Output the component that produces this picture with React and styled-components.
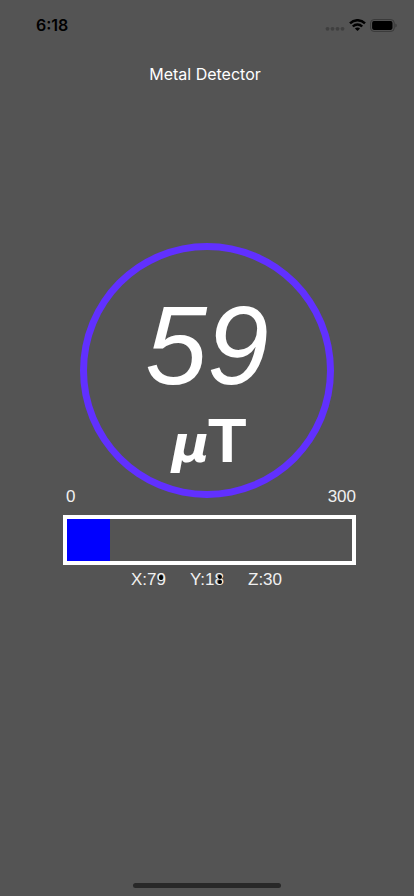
import styled, { createGlobalStyle } from 'styled-components';

const GlobalStyle = createGlobalStyle`
  * {
    box-sizing: border-box;
  }
  body {
    margin: 0;
    background: #545454;
  }
`;

const StyledScreen = styled.div`
  display: flex;
  flex-direction: column;
  min-height: 100vh;
  background: #545454;
  color: #ffffff;
  font-family: 'Liberation Sans', sans-serif;
`;

const StyledStatusBar = styled.div`
  display: flex;
  align-items: center;
  justify-content: space-between;
  height: 50px;
  padding: 0 16px 0 36px;
  color: #000000;
  time {
    font-family: Inter, sans-serif;
    font-size: 16px;
    font-weight: 600;
    line-height: 20px;
  }
`;

const StyledStatusIcons = styled.div`
  display: flex;
  align-items: center;
  gap: 4px;
  svg {
    display: block;
  }
`;

const StyledTitle = styled.h1`
  margin: 12px 0 0;
  padding-right: 4px;
  font-family: Inter, sans-serif;
  font-size: 16px;
  font-weight: 400;
  line-height: 24px;
  text-align: center;
`;

const StyledMain = styled.main`
  display: flex;
  flex: 1;
  flex-direction: column;
  padding-top: 157px;
`;

const StyledDial = styled.div`
  display: flex;
  flex-direction: column;
  align-items: center;
  align-self: center;
  width: 254px;
  height: 255px;
  padding-top: 40px;
  border: 7px solid #6130ff;
  border-radius: 50%;
`;

const StyledValue = styled.div`
  font-size: 111px;
  font-style: italic;
  line-height: 112px;
`;

const StyledUnit = styled.div`
  margin-top: 6px;
  padding-left: 4px;
  font-size: 63px;
  font-weight: 700;
  line-height: 64px;
  em {
    margin-right: -2px;
    font-family: 'DejaVu Sans', sans-serif;
    font-size: 52px;
    line-height: 52px;
  }
`;

const StyledMeter = styled.section`
  margin: -10px 58px 0 63px;
`;

const StyledScale = styled.div`
  display: flex;
  justify-content: space-between;
  padding-left: 3px;
  color: #f0f0f0;
  font-size: 17px;
  line-height: 18px;
`;

const StyledTrack = styled.div`
  height: 50px;
  margin-top: 9px;
  border: 4px solid #ffffff;
`;

const StyledFill = styled.div`
  height: 100%;
  background: #0000ff;
`;

const StyledReadings = styled.div`
  display: flex;
  justify-content: center;
  gap: 24px;
  margin-top: 5px;
  padding-right: 6px;
  color: #f0f0f0;
  font-size: 17px;
  line-height: 20px;
`;

const StyledDigit = styled.span`
  position: relative;
`;

const StyledDot = styled.i`
  position: absolute;
  top: ${({ $top }) => $top}px;
  left: 3px;
  width: 4px;
  height: ${({ $size }) => $size}px;
  border-radius: 50%;
  background: #000000;
`;

const StyledHomeIndicator = styled.div`
  align-self: center;
  width: 148px;
  height: 5px;
  margin-bottom: 8px;
  border-radius: 3px;
  background: #282828;
`;

function StatusIcons() {
  return (
    <StyledStatusIcons>
      <svg width="20" height="14" viewBox="0 0 20 14" fill="#3f3f3f">
        <circle cx="2.5" cy="10.8" r="1.9" />
        <circle cx="7.5" cy="10.8" r="1.9" />
        <circle cx="12.5" cy="10.8" r="1.9" />
        <circle cx="17.5" cy="10.8" r="1.9" />
      </svg>
      <svg width="17" height="12" viewBox="0 0 17 12">
        <g fill="none" stroke="#000" strokeWidth="2.4">
          <path d="M1 4.4C5.2.1 11.8.1 16 4.4" />
          <path d="M3.8 7.5c2.7-2.7 6.7-2.7 9.4 0" />
        </g>
        <path d="M5.9 9.5c1.5-1.3 3.7-1.3 5.2 0L8.5 12z" />
      </svg>
      <svg width="28" height="13" viewBox="0 0 28 13">
        <rect
          x=".6"
          y=".6"
          width="23.6"
          height="11.8"
          rx="3.3"
          fill="none"
          stroke="#383838"
        />
        <rect x="2.1" y="2.1" width="20.4" height="8.8" rx="1.8" />
        <path d="M25.4 4.4c1.7.7 1.7 3.5 0 4.2z" fill="#383838" />
      </svg>
    </StyledStatusIcons>
  );
}

export default function App() {
  const value = 59;
  const percent = 15;

  return (
    <StyledScreen>
      <GlobalStyle />
      <StyledStatusBar>
        <time>6:18</time>
        <StatusIcons />
      </StyledStatusBar>
      <StyledTitle>Metal Detector</StyledTitle>
      <StyledMain>
        <StyledDial>
          <StyledValue>{value}</StyledValue>
          <StyledUnit>
            <em>µ</em>T
          </StyledUnit>
        </StyledDial>
        <StyledMeter>
          <StyledScale>
            <span>0</span>
            <span>300</span>
          </StyledScale>
          <StyledTrack>
            <StyledFill style={{ width: `${percent}%` }} />
          </StyledTrack>
          <StyledReadings>
            <span>
              X:7
              <StyledDigit>
                9<StyledDot $top={5} $size={5} />
              </StyledDigit>
            </span>
            <span>
              Y:1
              <StyledDigit>
                8<StyledDot $top={5} $size={4} />
                <StyledDot $top={10} $size={4} />
              </StyledDigit>
            </span>
            <span>Z:30</span>
          </StyledReadings>
        </StyledMeter>
      </StyledMain>
      <StyledHomeIndicator />
    </StyledScreen>
  );
}
